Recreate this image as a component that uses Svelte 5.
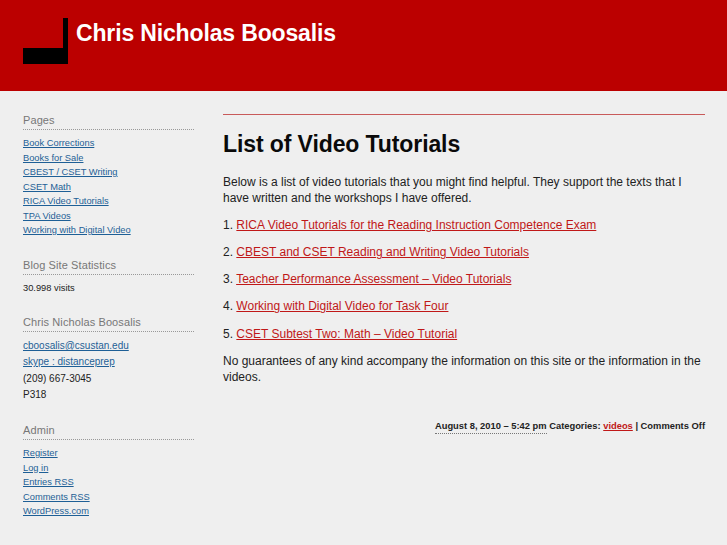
<script>
const pages = ["Book Corrections","Books for Sale","CBEST / CSET Writing","CSET Math","RICA Video Tutorials","TPA Videos","Working with Digital Video"];
const admin = ["Register","Log in","Entries RSS","Comments RSS","WordPress.com"];
const items = ["RICA Video Tutorials for the Reading Instruction Competence Exam","CBEST and CSET Reading and Writing Video Tutorials","Teacher Performance Assessment – Video Tutorials","Working with Digital Video for Task Four","CSET Subtest Two: Math – Video Tutorial"];
</script>

<div class="page">
  <header>
    <div class="logo"></div>
    <a class="site" href="#/">Chris Nicholas Boosalis</a>
  </header>
  <div class="body">
    <aside>
      <section>
        <h3>Pages</h3>
        <ul>{#each pages as p}<li><a href="#/">{p}</a></li>{/each}</ul>
      </section>
      <section>
        <h3>Blog Site Statistics</h3>
        <ul><li>30.998 visits</li></ul>
      </section>
      <section>
        <h3>Chris Nicholas Boosalis</h3>
        <div class="contact">
          <p><a href="#/">cboosalis@csustan.edu</a></p>
          <p><a href="#/">skype : distanceprep</a></p>
          <p>(209) 667-3045</p>
          <p>P318</p>
        </div>
      </section>
      <section>
        <h3>Admin</h3>
        <ul>{#each admin as p}<li><a href="#/">{p}</a></li>{/each}</ul>
      </section>
    </aside>
    <main>
      <h1>List of Video Tutorials</h1>
      <p>Below is a list of video tutorials that you might find helpful. They support the texts that I have written and the workshops I have offered.</p>
      {#each items as it, i}
        <p>{i + 1}. <a href="#/">{it}</a></p>
      {/each}
      <p>No guarantees of any kind accompany the information on this site or the information in the videos.</p>
      <div class="meta"><span class="date">August 8, 2010 – 5:42 pm</span> Categories: <a href="#/">videos</a> | Comments Off</div>
    </main>
  </div>
</div>

<style>
:global(body){margin:0;background:#efefef;font-family:"Liberation Sans",Arial,sans-serif}
.page{width:727px;height:545px;overflow:hidden;background:#efefef}
header{height:91px;background:#bb0000;display:flex;align-items:flex-start;box-sizing:border-box;padding:18px 0 0 23px;gap:8px}
.logo{width:45px;height:46px;flex:none;background:linear-gradient(#000,#000) right top/5px 100% no-repeat,linear-gradient(#000,#000) left bottom/100% 16px no-repeat}
.site{color:#fff;font-size:23px;font-weight:700;text-decoration:none;line-height:30px;letter-spacing:-.15px}
.body{display:flex;padding:22px 22px 0 23px}
aside{width:171px;flex:none;margin-right:29px;font-size:9.3px;color:#222}
section{margin-bottom:20px}
h3{margin:0 0 6px;font-size:11px;font-weight:400;color:#777;border-bottom:1px dotted #999;line-height:14px;padding-bottom:2px;letter-spacing:.1px}
ul{list-style:none;margin:0;padding:0}
li{line-height:14.5px}
aside a{color:#1e5f96}
.contact{font-size:10px}
.contact p{margin:0;line-height:16.3px}
main{flex:1;border-top:1px solid #c85a5a;margin-top:1px;font-size:12px;color:#222;line-height:16.1px}
h1{font-size:23px;font-weight:700;margin:15px 0 16px;line-height:28px;color:#0a0a0a;letter-spacing:-.1px}
main p{margin:0 0 11px}
main a{color:#c01818}
.meta{font-size:9.35px;font-weight:700;text-align:right;margin-top:33px;color:#222}
.date{border-bottom:1px dotted #777;padding-bottom:2px}
</style>
